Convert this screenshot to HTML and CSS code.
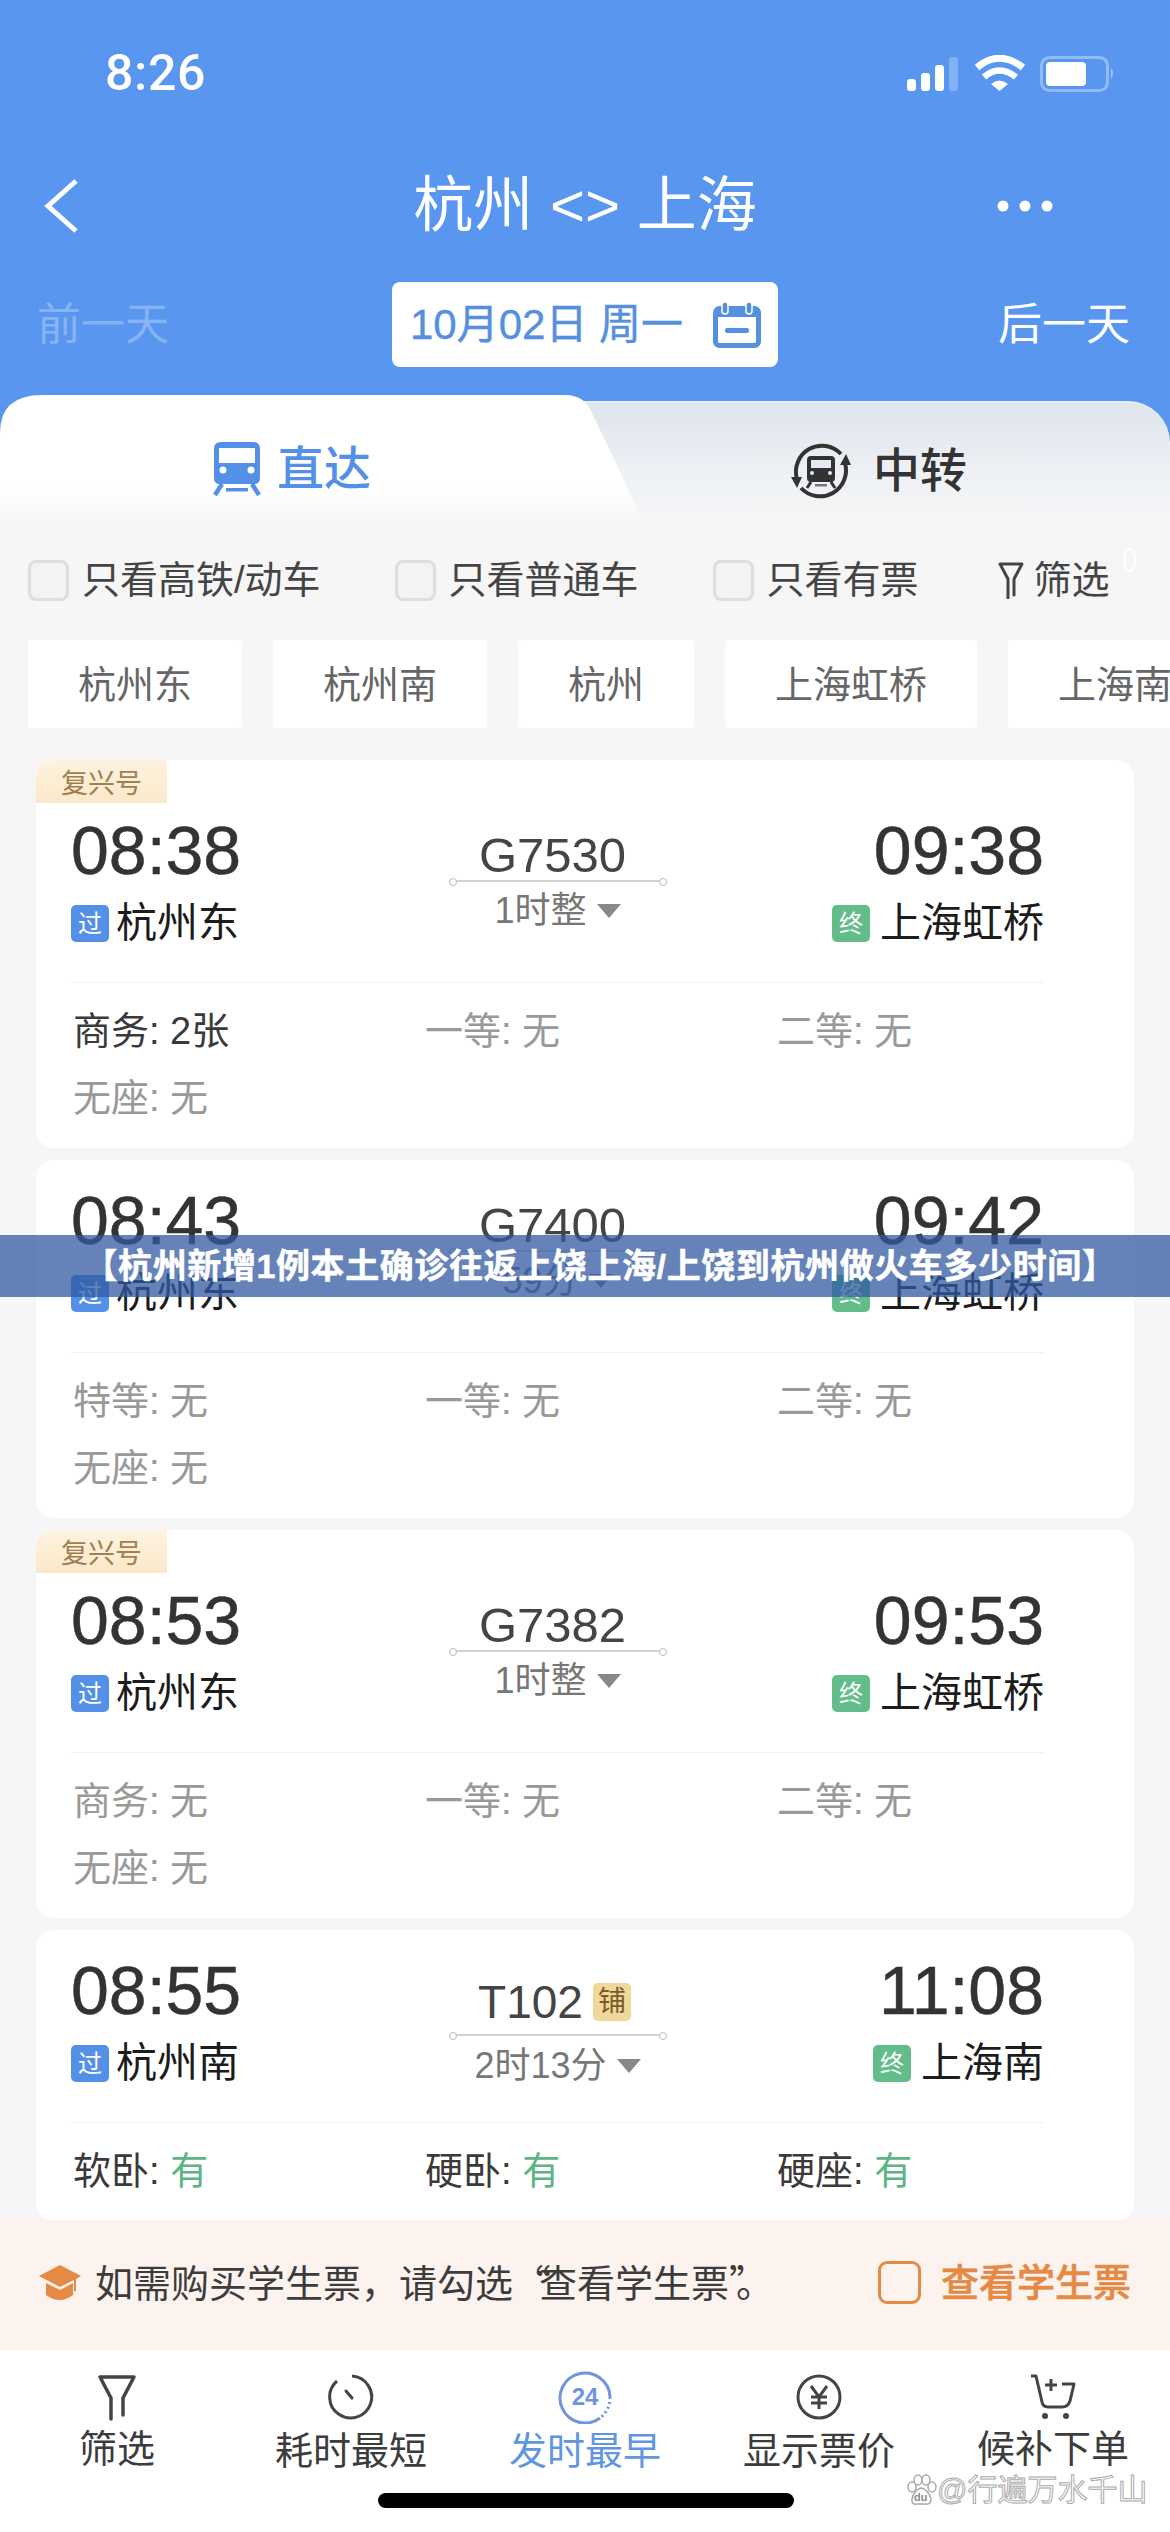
FILE: index.html
```html
<!DOCTYPE html>
<html lang="zh-CN">
<head>
<meta charset="utf-8">
<title>杭州 &lt;&gt; 上海</title>
<link rel="stylesheet" href="styles.css">
</head>
<body>
<div class="page">
  <header class="header">
    <div class="status">
      <span class="clock">8:26</span>
      <svg class="status-icons" width="208" height="37" viewBox="0 0 208 37">
        <rect x="0" y="24" width="9" height="12" rx="3" fill="#fff"/>
        <rect x="14" y="18" width="9" height="18" rx="3" fill="#fff"/>
        <rect x="28" y="10" width="9" height="26" rx="3" fill="#fff"/>
        <rect x="42" y="2" width="9" height="34" rx="3" fill="#fff" opacity=".25"/>
        <path d="M70 12.5 Q92 -6 116 12.5" fill="none" stroke="#fff" stroke-width="7"/>
        <path d="M77 22 Q92 9 109 22" fill="none" stroke="#fff" stroke-width="6.5"/>
        <path d="M84 29 Q92 22 101 29 L92.5 36Z" fill="#fff"/>
        <rect x="134.5" y="2.5" width="66" height="33" rx="8" fill="none" stroke="#fff" stroke-opacity=".35" stroke-width="3"/>
        <rect x="139" y="7" width="40" height="24" rx="4" fill="#fff"/>
        <path d="M204 13 Q208 18 204 24Z" fill="#fff" opacity=".45"/>
      </svg>
    </div>
    <div class="navbar">
      <svg class="back" width="37" height="54" viewBox="0 0 37 54"><path d="M33 2 L5 27 L33 52" fill="none" stroke="#fff" stroke-width="5"/></svg>
      <h1 class="title">杭州 &lt;&gt; 上海</h1>
      <svg class="more" width="56" height="12" viewBox="0 0 56 12"><circle cx="6" cy="6" r="5.5" fill="#fff"/><circle cx="28" cy="6" r="5.5" fill="#fff"/><circle cx="50" cy="6" r="5.5" fill="#fff"/></svg>
    </div>
    <div class="daterow">
      <span class="day day-off">前一天</span>
      <div class="datebox">
        <span class="datetext">10月02日 周一</span>
        <svg width="48" height="46" viewBox="0 0 48 46"><rect x="2.5" y="6.5" width="43" height="37" rx="4" fill="none" stroke="#5590e0" stroke-width="5"/><rect x="2" y="6" width="44" height="9" fill="#5590e0"/><rect x="9" y="0" width="6" height="12" rx="3" fill="#5590e0" stroke="#fff" stroke-width="1.5"/><rect x="33" y="0" width="6" height="12" rx="3" fill="#5590e0" stroke="#fff" stroke-width="1.5"/><rect x="12" y="26" width="24" height="5" rx="2" fill="#5590e0"/></svg>
      </div>
      <span class="day day-next">后一天</span>
    </div>
  </header>

  <div class="tabs">
    <div class="tab tab-direct">
      <svg width="48" height="54" viewBox="0 0 48 54"><path d="M8 0H40Q47 0 47 7V36Q47 42 41 42H7Q1 42 1 36V7Q1 0 8 0Z" fill="#5590e8"/><rect x="6" y="6" width="36" height="15" fill="#fff"/><circle cx="10" cy="28" r="3.5" fill="#fff"/><circle cx="38" cy="28" r="3.5" fill="#fff"/><path d="M9 42 L2 53M39 42 L46 53" stroke="#5590e8" stroke-width="4.5" fill="none"/><rect x="13" y="46" width="22" height="3.5" fill="#5590e8"/></svg>
      <span class="tab-label">直达</span>
    </div>
    <div class="tab tab-transfer">
      <svg width="60" height="60" viewBox="0 0 60 60"><path d="M6 38A26 26 0 0 1 50 13" fill="none" stroke="#333" stroke-width="4"/><path d="M54 22A26 26 0 0 1 10 47" fill="none" stroke="#333" stroke-width="4"/><path d="M0 36H11L6 47Z" fill="#333"/><path d="M49 24H60L55 13Z" fill="#333"/><path d="M20 15H40Q44 15 44 19V37Q44 41 40 41H20Q16 41 16 37V19Q16 15 20 15Z" fill="#333"/><rect x="20" y="19" width="20" height="8" fill="#e6eaf0"/><circle cx="21" cy="32" r="2" fill="#e6eaf0"/><circle cx="39" cy="32" r="2" fill="#e6eaf0"/><path d="M20 41 L16 47M40 41 L44 47" stroke="#333" stroke-width="3"/><rect x="24" y="43" width="12" height="2.5" fill="#777"/></svg>
      <span class="tab-label">中转</span>
    </div>
  </div>

  <div class="filters">
    <label class="check"><span class="box"></span>只看高铁/动车</label>
    <label class="check"><span class="box"></span>只看普通车</label>
    <label class="check"><span class="box"></span>只看有票</label>
    <div class="filter-btn">
      <svg width="26" height="38" viewBox="0 0 26 38"><path d="M2 3H24L16 18V34M2 3L10 18V37" fill="none" stroke="#444" stroke-width="3" stroke-linejoin="round" stroke-linecap="round"/></svg>
      <span>筛选</span>
      <i class="ring"></i>
    </div>
  </div>

  <div class="stations">
    <span class="pill">杭州东</span>
    <span class="pill">杭州南</span>
    <span class="pill">杭州</span>
    <span class="pill">上海虹桥</span>
    <span class="pill">上海南</span>
  </div>

  <main class="list">
    <article class="card tagged">
      <span class="tag">复兴号</span>
      <div class="trip">
        <div class="end"><div class="time">08:38</div><div class="stn"><b class="badge pass">过</b>杭州东</div></div>
        <div class="mid"><div class="no">G7530</div><div class="line"></div><div class="dur">1时整<i class="tri"></i></div></div>
        <div class="end right"><div class="time">09:38</div><div class="stn"><b class="badge term">终</b>上海虹桥</div></div>
      </div>
      <div class="seats">
        <span class="seat on">商务: 2张</span><span class="seat">一等: 无</span><span class="seat">二等: 无</span><span class="seat">无座: 无</span>
      </div>
    </article>

    <article class="card">
      <div class="trip">
        <div class="end"><div class="time">08:43</div><div class="stn"><b class="badge pass">过</b>杭州东</div></div>
        <div class="mid"><div class="no">G7400</div><div class="line"></div><div class="dur">59分<i class="tri"></i></div></div>
        <div class="end right"><div class="time">09:42</div><div class="stn"><b class="badge term">终</b>上海虹桥</div></div>
      </div>
      <div class="seats">
        <span class="seat">特等: 无</span><span class="seat">一等: 无</span><span class="seat">二等: 无</span><span class="seat">无座: 无</span>
      </div>
    </article>

    <article class="card tagged">
      <span class="tag">复兴号</span>
      <div class="trip">
        <div class="end"><div class="time">08:53</div><div class="stn"><b class="badge pass">过</b>杭州东</div></div>
        <div class="mid"><div class="no">G7382</div><div class="line"></div><div class="dur">1时整<i class="tri"></i></div></div>
        <div class="end right"><div class="time">09:53</div><div class="stn"><b class="badge term">终</b>上海虹桥</div></div>
      </div>
      <div class="seats">
        <span class="seat">商务: 无</span><span class="seat">一等: 无</span><span class="seat">二等: 无</span><span class="seat">无座: 无</span>
      </div>
    </article>

    <article class="card sleeper">
      <div class="trip">
        <div class="end"><div class="time">08:55</div><div class="stn"><b class="badge pass">过</b>杭州南</div></div>
        <div class="mid"><div class="no">T102<b class="berth">铺</b></div><div class="line"></div><div class="dur">2时13分<i class="tri"></i></div></div>
        <div class="end right"><div class="time">11:08</div><div class="stn"><b class="badge term">终</b>上海南</div></div>
      </div>
      <div class="seats">
        <span class="seat on">软卧: <em>有</em></span><span class="seat on">硬卧: <em>有</em></span><span class="seat on">硬座: <em>有</em></span>
      </div>
    </article>
  </main>

  <div class="student">
    <svg width="42" height="36" viewBox="0 0 42 36"><path d="M21 0L42 11L37 14V26H35V15L21 22L0 11Z" fill="#e58a45"/><path d="M7 18L21 25L34 18V30Q21 40 7 30Z" fill="#e58a45"/></svg>
    <p class="student-text">如需购买学生票，请勾选<span class="quote-open">“</span>查看学生票<span class="quote-close">”</span>。</p>
    <span class="student-box"></span>
    <span class="student-label">查看学生票</span>
  </div>

  <nav class="bottom">
    <div class="nav-item">
      <svg width="40" height="46" viewBox="0 0 40 46"><path d="M3 3H37L26 24V41M3 3L14 24V45" fill="none" stroke="#444" stroke-width="3.5" stroke-linejoin="round" stroke-linecap="round"/></svg>
      <span>筛选</span>
    </div>
    <div class="nav-item low">
      <svg width="46" height="46" viewBox="0 0 46 46"><path d="M24 2A21 21 0 1 1 9 7" fill="none" stroke="#444" stroke-width="3"/><path d="M18 17L24 24" stroke="#444" stroke-width="3" stroke-linecap="round"/></svg>
      <span>耗时最短</span>
    </div>
    <div class="nav-item low active">
      <svg width="54" height="54" viewBox="0 0 54 54"><path d="M42 48A25 25 0 1 1 52 27" fill="none" stroke="#6f95dc" stroke-width="3"/><path d="M52 27A25 25 0 0 1 42 48" fill="none" stroke="#6f95dc" stroke-width="3" stroke-dasharray="2 3"/><text x="27" y="35" text-anchor="middle" class="nav-24">24</text></svg>
      <span>发时最早</span>
    </div>
    <div class="nav-item low">
      <svg width="46" height="46" viewBox="0 0 46 46"><circle cx="23" cy="23" r="21" fill="none" stroke="#444" stroke-width="3"/><path d="M15 12L23 23L31 12M23 23V35M15 23H31M15 29H31" fill="none" stroke="#444" stroke-width="3"/></svg>
      <span>显示票价</span>
    </div>
    <div class="nav-item">
      <svg width="46" height="46" viewBox="0 0 46 46"><path d="M1 2H6L12 28Q13 33 18 33H32Q38 33 40 27L44 10H32" fill="none" stroke="#444" stroke-width="3" stroke-linejoin="round"/><path d="M21 5V17M15 11H27" stroke="#444" stroke-width="3"/><circle cx="15" cy="42" r="3" fill="#444"/><circle cx="36" cy="42" r="3" fill="#444"/></svg>
      <span>候补下单</span>
    </div>
  </nav>

  <div class="overlay-title">【杭州新增1例本土确诊往返上饶上海/上饶到杭州做火车多少时间】</div>
  <div class="watermark">
    <div class="paw">
      <svg width="32" height="32" viewBox="0 0 32 32"><g fill="#fff" stroke="#aaa" stroke-width="1.5"><ellipse cx="7" cy="13" rx="4" ry="5"/><ellipse cx="13" cy="6" rx="4" ry="5"/><ellipse cx="21" cy="6" rx="4" ry="5"/><ellipse cx="27" cy="13" rx="4" ry="5"/><path d="M16 14Q24 16 26 25Q26 31 20 30H12Q6 31 7 25Q9 16 16 14Z"/></g></svg>
      <span class="paw-du">du</span>
    </div>
    <span class="watermark-text">@行遍万水千山</span>
  </div>
  <div class="home-bar"></div>
</div>
</body>
</html>
```

FILE: styles.css
```css
* { box-sizing: border-box; }
html, body { margin: 0; padding: 0; }
body {
  font-family: "Liberation Sans", "Noto Sans CJK SC", sans-serif;
  color: #333;
  background: #f6f6f6;
}
.page {
  position: relative;
  width: 1170px;
  height: 2532px;
  display: flex;
  flex-direction: column;
  overflow: hidden;
  background: #f6f6f6;
}

/* Header */
.header { height: 395px; flex: none; background: #5896f0; color: #fff; padding-bottom: 29px; }
.status { height: 146px; display: flex; align-items: center; justify-content: space-between; padding: 0 55px 0 105px; }
.clock { font-family: Roboto, "Liberation Sans", sans-serif; font-weight: 500; font-size: 50px; letter-spacing: .7px; line-height: 1; }
.status-icons { display: block; }
.navbar { height: 120px; display: grid; grid-template-columns: 1fr auto 1fr; align-items: center; padding: 0 93px; }
.back { display: block; margin-left: -50px; }
.more { justify-self: end; display: block; margin-right: 24px; }
.title { margin: 0; font-size: 60px; font-weight: 400; line-height: 70px; }
.daterow { margin-top: 16px; height: 85px; display: grid; grid-template-columns: 392px 386px 392px; align-items: center; }
.day { font-size: 44px; line-height: 60px; }
.day-off { padding-left: 37px; color: rgba(255, 255, 255, .3); }
.day-next { justify-self: end; padding-right: 40px; }
.datebox { height: 85px; background: #fff; border-radius: 8px; display: flex; align-items: center; justify-content: space-between; padding: 0 17px 0 18px; color: #5590e0; }
.datetext { font-size: 42px; line-height: 50px; -webkit-text-stroke: .4px #5590e0; }

/* Tabs */
.tabs { height: 130px; flex: none; display: flex; background: #5896f0; }
.tab { height: 130px; display: flex; align-items: center; }
.tab-label { font-size: 47px; font-weight: 500; line-height: 60px; }
.tab-direct {
  width: 645px;
  position: relative;
  z-index: 1;
  padding: 17px 0 0 213px;
  gap: 16px;
  color: #5590e8;
  background: linear-gradient(#fff 0, #fff 68%, #f6f6f6 100%);
  clip-path: path("M0 130 V38 Q0 0 42 0 H565 Q585 0 592 18 L645 130 Z");
}
.tab-direct svg, .tab-transfer svg { flex: none; }
.tab-transfer {
  flex: 1;
  margin: 6px 0 0 -105px;
  height: 124px;
  padding: 13px 0 0 251px;
  gap: 22px;
  color: #333;
  border-top: 2px solid #e9eef5;
  border-radius: 0 42px 0 0;
  background: linear-gradient(#dfe5ed 0, #eef1f5 60%, #f6f6f6 100%);
}

/* Filters */
.filters { height: 110px; margin-bottom: 5px; flex: none; display: flex; align-items: center; gap: 74px; padding-left: 28px; font-size: 38px; color: #444; }
.check { display: flex; align-items: center; gap: 13px; line-height: 50px; white-space: nowrap; }
.box { width: 41px; height: 41px; border: 3px solid #dedede; border-radius: 8px; background: #f3f3f3; flex: none; }
.filter-btn { position: relative; display: flex; align-items: center; gap: 10px; margin-left: 5px; font-size: 38px; line-height: 50px; }
.ring { position: absolute; top: -7px; right: -26px; width: 13px; height: 24px; border: 2px solid #fff; border-radius: 50%; }

/* Stations */
.stations { height: 88px; flex: none; display: flex; gap: 31px; padding-left: 28px; overflow: hidden; }
.pill { flex: none; padding: 0 50px 6px; display: flex; align-items: center; background: #fff; border-radius: 4px; font-size: 38px; color: #666; }

/* Cards */
.list { flex: 1; min-height: 0; overflow: hidden; padding: 32px 36px 0; display: flex; flex-direction: column; gap: 12px; }
.card { position: relative; flex: none; background: #fff; border-radius: 18px; padding: 30px 90px 16px 35px; }
.card.tagged { padding-top: 60px; }
.card.sleeper { padding-top: 30px; }
.tag { position: absolute; top: 0; left: 0; width: 131px; height: 43px; display: flex; align-items: center; justify-content: center; font-size: 27px; color: #a07f50; background: linear-gradient(#fdf3e0, #fbe8c9); border-radius: 18px 0 0 0; }
.trip { display: grid; grid-template-columns: 1fr 216px 1fr; height: 122px; }
.time { margin-top: -3px; font-size: 68px; line-height: 66px; color: #333; -webkit-text-stroke: .5px #333; }
.stn { margin-top: 22px; display: flex; align-items: center; gap: 7px; font-size: 41px; line-height: 37px; color: #1c1c1c; }
.right { text-align: right; }
.right .stn { justify-content: flex-end; gap: 10px; }
.badge { width: 38px; height: 37px; border-radius: 5px; display: flex; align-items: center; justify-content: center; color: #fff; font-size: 24px; font-weight: 400; }
.pass { background: #5590e8; }
.term { background: #62bd8b; }
.mid { text-align: center; padding-top: 11px; }
.no { font-size: 49px; line-height: 48px; color: #444; display: flex; justify-content: center; align-items: center; padding-right: 10px; }
.line { position: relative; height: 2px; background: #d2d2d2; margin-top: 1px; }
.line::before, .line::after { content: ""; position: absolute; top: -2px; width: 6px; height: 6px; background: #fff; border: 1px solid #bbb; border-radius: 50%; }
.line::before { left: -1px; }
.line::after { right: -1px; }
.dur { margin-top: 5px; font-size: 36px; line-height: 48px; color: #777; display: flex; justify-content: center; align-items: center; gap: 10px; }
.tri { width: 0; height: 0; border-left: 12px solid transparent; border-right: 12px solid transparent; border-top: 14px solid #888; }
.sleeper .mid { padding-top: 18px; }
.sleeper .no { font-size: 46px; padding-right: 6px; }
.sleeper .dur { margin-top: 6px; }
.sleeper .line { margin-top: 8px; }
.berth { margin-left: 10px; width: 38px; height: 38px; border-radius: 5px; display: flex; align-items: center; justify-content: center; font-size: 28px; font-weight: 400; color: #7a5c2a; background: #f0d79a; }
.seats { margin-top: 40px; padding: 15px 0 0 2px; border-top: 1px solid #f1f1f1; display: grid; grid-template-columns: 352px 352px 1fr; }
.seat { font-size: 38px; line-height: 67px; color: #999; }
.seat.on { color: #3a3a3a; }
.seat em { font-style: normal; color: #5db585; }

/* Student notice */
.student { height: 130px; flex: none; display: flex; align-items: center; padding: 0 39px 5px 39px; background: #fdf3ee; }
.student-text { margin: 0 0 0 14px; font-size: 38px; line-height: 50px; color: #3c3c3c; white-space: nowrap; }
.quote-open, .quote-close { font-family: "Noto Sans CJK SC", sans-serif; }
.quote-open { letter-spacing: -12px; }
.quote-close { letter-spacing: -12px; }
.student-box { margin-left: auto; width: 43px; height: 43px; border: 3px solid #e58a45; border-radius: 9px; }
.student-label { margin-left: 20px; font-size: 38px; font-weight: 500; line-height: 50px; color: #e58a45; -webkit-text-stroke: .6px #e58a45; }

/* Bottom nav */
.bottom { height: 182px; flex: none; display: flex; background: #fff; padding-top: 20px; }
.nav-item { width: 234px; display: flex; flex-direction: column; align-items: center; font-size: 38px; line-height: 44px; color: #3c3c3c; }
.nav-item svg { height: 54px; display: block; }
.nav-item span { margin-top: 3px; }
.nav-item.low span { margin-top: 5px; }
.nav-item.active { color: #5f96e0; }
.nav-24 { font-family: "Liberation Sans", sans-serif; font-size: 24px; font-weight: 700; fill: #6f95dc; }

/* Overlays */
.overlay-title { position: absolute; left: 0; right: 0; top: 1235px; height: 62px; padding-left: 30px; background: rgba(49, 89, 161, .75); color: #fff; font-size: 34px; font-weight: 700; letter-spacing: .6px; line-height: 62px; text-align: center; white-space: nowrap; -webkit-text-stroke: .5px #fff; }
.home-bar { position: absolute; left: 378px; top: 2493px; width: 416px; height: 15px; border-radius: 8px; background: #000; }
.watermark { position: absolute; left: 905px; top: 2473px; display: flex; align-items: center; gap: 0; }
.watermark-text { font-size: 30px; line-height: 34px; color: #fff; -webkit-text-stroke: 1px #aaa; white-space: nowrap; }
.paw { position: relative; width: 32px; height: 32px; }
.paw svg { display: block; }
.paw-du { position: absolute; left: 9px; top: 17px; font-size: 11px; font-weight: 700; line-height: 12px; color: #888; }
```
